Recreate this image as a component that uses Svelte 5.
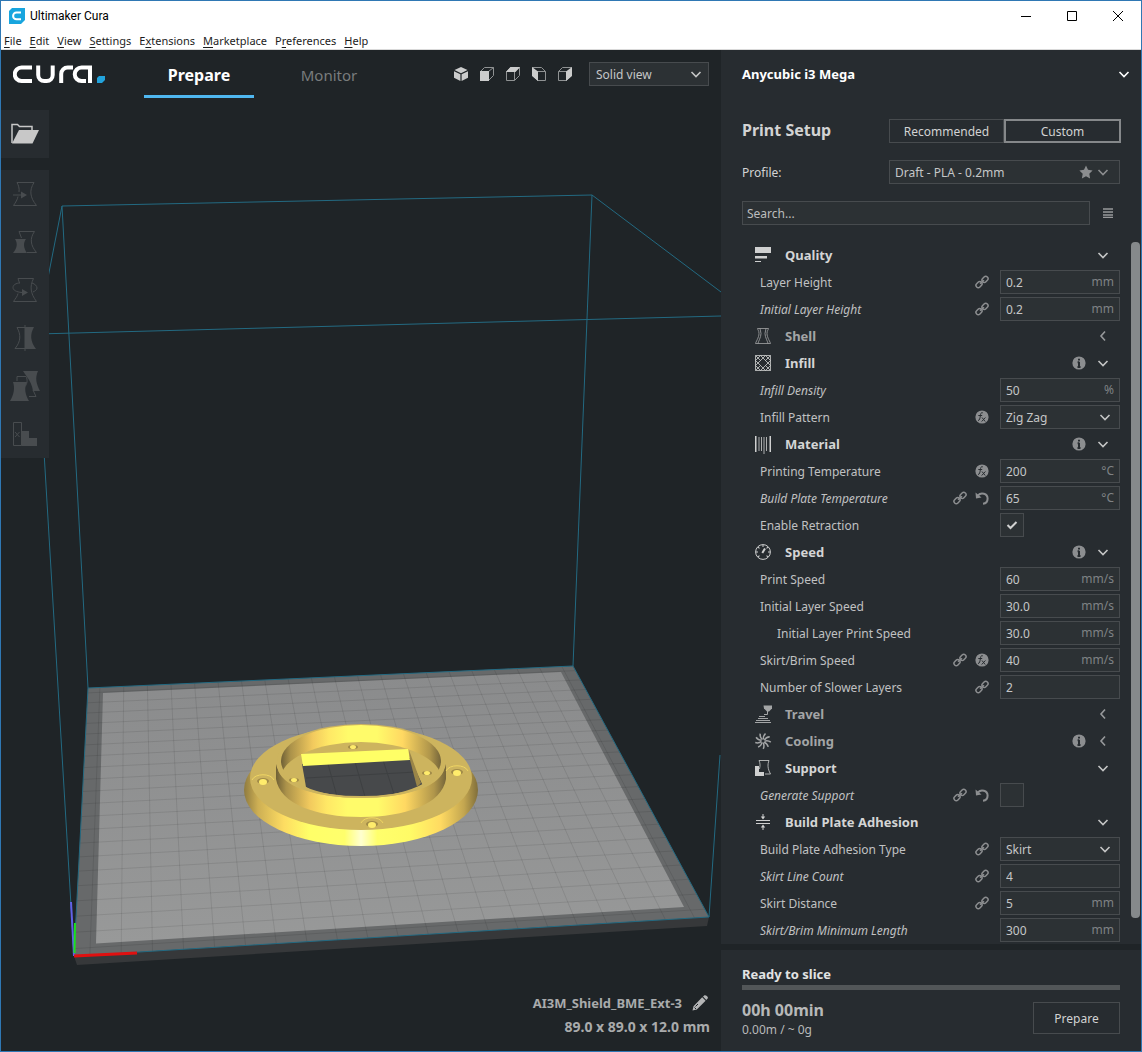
<script>
  const menus = [
    ['', 'F', 'ile'], ['', 'E', 'dit'], ['', 'V', 'iew'], ['', 'S', 'ettings'], ['E', 'x', 'tensions'],
    ['', 'M', 'arketplace'], ['P', 'r', 'eferences'], ['', 'H', 'elp']
  ];

  const tools = ['Move', 'Scale', 'Rotate', 'Mirror', 'Per Model Settings', 'Support Blocker'];
  const views = ['3D View', 'Front View', 'Top View', 'Left View', 'Right View'];

  const rows = [
    { cat: 'Quality', open: true },
    { name: 'Layer Height', marks: ['link'], value: '0.2', unit: 'mm' },
    { name: 'Initial Layer Height', changed: true, marks: ['link'], value: '0.2', unit: 'mm' },
    { cat: 'Shell', open: false },
    { cat: 'Infill', open: true, info: true },
    { name: 'Infill Density', changed: true, marks: [], value: '50', unit: '%' },
    { name: 'Infill Pattern', marks: ['fx'], select: 'Zig Zag' },
    { cat: 'Material', open: true, info: true },
    { name: 'Printing Temperature', marks: ['fx'], value: '200', unit: '°C' },
    { name: 'Build Plate Temperature', changed: true, marks: ['link', 'reset'], value: '65', unit: '°C' },
    { name: 'Enable Retraction', marks: [], check: true, checked: true },
    { cat: 'Speed', open: true, info: true },
    { name: 'Print Speed', marks: [], value: '60', unit: 'mm/s' },
    { name: 'Initial Layer Speed', marks: [], value: '30.0', unit: 'mm/s' },
    { name: 'Initial Layer Print Speed', child: true, marks: [], value: '30.0', unit: 'mm/s' },
    { name: 'Skirt/Brim Speed', marks: ['link', 'fx'], value: '40', unit: 'mm/s' },
    { name: 'Number of Slower Layers', marks: ['link'], value: '2', unit: '' },
    { cat: 'Travel', open: false },
    { cat: 'Cooling', open: false, info: true },
    { cat: 'Support', open: true },
    { name: 'Generate Support', changed: true, marks: ['link', 'reset'], check: true, checked: false },
    { cat: 'Build Plate Adhesion', open: true },
    { name: 'Build Plate Adhesion Type', marks: ['link'], select: 'Skirt' },
    { name: 'Skirt Line Count', changed: true, marks: ['link'], value: '4', unit: '' },
    { name: 'Skirt Distance', marks: ['link'], value: '5', unit: 'mm' },
    { name: 'Skirt/Brim Minimum Length', changed: true, marks: [], value: '300', unit: 'mm' }
  ];

  // Perspective mapping of the unit square onto the build plate corners.
  const [p0, p1, p2, p3] = [[74, 957], [709, 917], [573, 666], [88, 688]];
  const dx1 = p1[0] - p2[0], dx2 = p3[0] - p2[0], sx = p0[0] - p1[0] + p2[0] - p3[0];
  const dy1 = p1[1] - p2[1], dy2 = p3[1] - p2[1], sy = p0[1] - p1[1] + p2[1] - p3[1];
  const det = dx1 * dy2 - dx2 * dy1;
  const g = (sx * dy2 - dx2 * sy) / det;
  const h = (dx1 * sy - sx * dy1) / det;
  function plate(u, v) {
    const w = g * u + h * v + 1;
    const x = ((p1[0] - p0[0] + g * p1[0]) * u + (p3[0] - p0[0] + h * p3[0]) * v + p0[0]) / w;
    const y = ((p1[1] - p0[1] + g * p1[1]) * u + (p3[1] - p0[1] + h * p3[1]) * v + p0[1]) / w;
    return x.toFixed(1) + ' ' + y.toFixed(1);
  }
  const cells = 21;
  let grid = '';
  for (let i = 0; i < cells; i++) {
    const t = (i + 0.5) / cells;
    grid += `M${plate(t, 0)}L${plate(t, 1)}M${plate(0, t)}L${plate(1, t)}`;
  }
  const blades = [0, 40, 80, 120, 160, 200, 240, 280, 320];
  const ticks = [-135, -90, -45, 0, 45, 90, 135];
</script>

{#snippet chevron(open)}
  <svg class="chevron" width="12" height="12" viewBox="0 0 12 12" aria-hidden="true">
    <path d={open ? 'M1.5 4 6 8.5 10.5 4' : 'M8 1.5 4 6l4 4.5'} />
  </svg>
{/snippet}

{#snippet mark(kind)}
  <svg class="mark" width="14" height="14" viewBox="0 0 14 14" aria-hidden="true">
    {#if kind === 'link'}
      <g class="line">
        <rect x="-3.300" y="-2.300" width="6.600" height="4.600" rx="2.300" transform="translate(4 9.600) rotate(-45)" />
        <rect x="-3.300" y="-2.300" width="6.600" height="4.600" rx="2.300" transform="translate(10 4.400) rotate(-45)" />
        <path d="M5 8.800 9 5.200" />
      </g>
    {:else if kind === 'reset'}
      <path class="line heavy" d="M3 4.400C6 .8 12.600 2.400 12.600 7.500c0 3-2 5-4.600 5.300" />
      <path d="M.5 1.500 1 7.500l5.500-1z" />
    {:else if kind === 'fx'}
      <circle cx="7" cy="7" r="6.600" />
      <g class="cut">
        <path d="M7.800 2.800c-2-.6-2.200 1-2.500 3.200s-.6 4.500-2.300 4.500M3.300 5.500h3.900" />
        <path d="m7 7.500 3.200 4M10.400 7.500l-3.700 4" />
      </g>
    {:else}
      <circle cx="7" cy="7" r="6.600" />
      <path class="cut heavy" d="M7 2.800v1.800M7 5.800v5.200M5.600 6.200h1.400M5.500 11h3" />
    {/if}
  </svg>
{/snippet}

{#snippet category(name)}
  <svg class="cat-icon" width="16" height="16" viewBox="0 0 16 16" aria-hidden="true">
    {#if name === 'Quality'}
      <path class="fill" d="M0 0h16v6H0zM0 9h12v2.500H0zM0 14h6v1H0z" />
    {:else if name === 'Shell'}
      <path class="thin" d="M2.500.5h11M2.500.5c0 1 1.500 2 1.500 5 0 4-3.500 9-3.500 10h15c0-1-3.500-6-3.500-10 0-3 1.500-4 1.500-5M5 .5c0 2 1 3 1 5 0 4-3 8.500-3 10M11 .5c0 2-1 3-1 5 0 4 3 8.500 3 10" />
    {:else if name === 'Infill'}
      <path class="thin" d="M.5.5h15v15H.5zM.5 5.500l5-5M.5 10.500l10-10M5.500 15.500l10-10M10.500 15.500l5-5M.5 10.500l5 5M.5 5.500l10 10M5.500.5l10 10M10.500.5l5 5M.5.5l5 5M15.500.5l-5 5M.5 15.500l5-5M15.500 15.500l-5-5" />
    {:else if name === 'Material'}
      <path class="fill" d="M0 0h1.500v16H0zM14.500 0H16v16h-1.500z" />
      <path class="thin" d="M4 1v14M6.500 1v14M9 1v17M11.500 1v14" />
    {:else if name === 'Speed'}
      <circle cx="8" cy="8" r="7.400" />
      {#each ticks as a}
        <path d="M8 1v2" transform="rotate({a} 8 8)" />
      {/each}
      <path class="bold" d="M7.300 9 10 4.500" />
    {:else if name === 'Travel'}
      <path class="fill" d="M8.500-.5H17v3l-3 3h-2L9 2.500z" />
      <path d="M12.500 5v3.500H9M4 10.500h6M3 12.500h10M1 14.500h14M0 16.500h16" />
    {:else if name === 'Cooling'}
      {#each blades as a}
        <path class="blade" d="M8.500 6.500C8 4 9 2 10.500.5" transform="rotate({a} 8 8)" />
      {/each}
    {:else if name === 'Support'}
      <path class="fill" d="M0 6h4v6h5v4H0z" />
      <path class="thin" d="M4.500 9c1-4 .5-6-.5-8.500h10c-1.500 4-1.500 8 1.500 13.500H10" />
    {:else}
      <path d="M1 6.500h14M1 9.500h14M8 0v4M8 12v4" />
      <path class="fill" d="M5.800 2.500h4.400L8 5.500zM5.800 13.500h4.400L8 10.500z" />
    {/if}
  </svg>
{/snippet}

<div class="window">
  <header class="titlebar">
    <svg width="16" height="16" viewBox="0 0 16 16" aria-hidden="true">
      <path fill="#18a5de" d="M3 0h13v12l-4 4H0V3z" />
      <path fill="none" stroke="#fff" stroke-width="2" d="M12 4.500H7.500a3.400 3.400 0 0 0 0 6.800H12" />
    </svg>
    <h1>Ultimaker Cura</h1>
    <div class="window-buttons">
      <button aria-label="Minimize"><svg width="12" height="12" viewBox="0 0 12 12"><path d="M1 6.500h10" /></svg></button>
      <button aria-label="Maximize"><svg width="12" height="12" viewBox="0 0 12 12"><path d="M1.500 1.500h9v9h-9z" /></svg></button>
      <button aria-label="Close"><svg width="12" height="12" viewBox="0 0 12 12"><path d="m1 1 10 10M11 1 1 11" /></svg></button>
    </div>
  </header>

  <nav class="menubar" aria-label="Menu">
    {#each menus as [before, key, after]}
      <button>{before}<u>{key}</u>{after}</button>
    {/each}
  </nav>

  <div class="body">
    <main class="stage">
      <svg class="scene" viewBox="1 50 720 1001" preserveAspectRatio="xMinYMin slice" aria-hidden="true">
        <defs>
          <linearGradient id="bed" x1="0" y1="0" x2="0" y2="1">
            <stop offset="0" stop-color="#8a8b8c" /><stop offset="1" stop-color="#989999" />
          </linearGradient>
          <linearGradient id="bevel" x1="0" x2="1">
            <stop offset="0" stop-color="#8f7b40" /><stop offset=".06" stop-color="#cdaf54" />
            <stop offset=".17" stop-color="#fddc62" /><stop offset=".28" stop-color="#ffff68" />
            <stop offset=".43" stop-color="#ffff6c" /><stop offset=".5" stop-color="#ffffd0" />
            <stop offset=".57" stop-color="#ffff6c" /><stop offset=".71" stop-color="#fffb66" />
            <stop offset=".84" stop-color="#ffda62" /><stop offset=".94" stop-color="#c3a650" />
            <stop offset="1" stop-color="#806e3a" />
          </linearGradient>
          <linearGradient id="wall" x1="0" x2="1">
            <stop offset="0" stop-color="#6f6036" /><stop offset=".06" stop-color="#ab924a" />
            <stop offset=".2" stop-color="#f2ca5e" /><stop offset=".3" stop-color="#ffe866" />
            <stop offset=".42" stop-color="#fffb6a" /><stop offset=".6" stop-color="#fffb6a" />
            <stop offset=".76" stop-color="#ffd862" /><stop offset=".93" stop-color="#b0964b" />
            <stop offset="1" stop-color="#75653a" />
          </linearGradient>
          <clipPath id="opening"><ellipse cx="361" cy="761" rx="80" ry="36" /></clipPath>
        </defs>

        <path fill="#36383a" d="M74 956 709 917 707 926 77 965z" />
        <path fill="#67696a" d="M74 956 709 917 573 666 88 688z" />
        <path fill="url(#bed)" d="M96 943.500 684 907 561 672 103 693z" />
        <path class="grid" d={grid} />
        <path class="volume" d="M88 688 573 666 709 917 74 956zM62 206 592 195 573 666M62 206 88 688M62 206 37 334 721 316M592 195 721 292M37 334 74 956M720 755 709 917" />
        <path stroke="#6161e8" stroke-width="2" d="M71 902 74 956" />
        <path stroke="#1ee01e" stroke-width="2" d="M75 923 74.500 953" />
        <path stroke="#e01010" stroke-width="3" d="M74 956 137 953" />

        <ellipse cx="361" cy="790" rx="117" ry="56" fill="url(#bevel)" />
        <ellipse cx="361" cy="778" rx="111" ry="52" fill="#cdb45e" />
        <ellipse cx="361" cy="761" rx="84" ry="37" fill="#cdb45e" />
        <g clip-path="url(#opening)">
          <path fill="url(#wall)" d="M281 715h160v55H281z" />
          <ellipse cx="361" cy="780" rx="81" ry="38" fill="#cdb45e" />
          <path fill="#47494b" d="M302 764 410 758 423 786 390 802H330L306 787z" />
          <path class="seam" d="M306 778 416 772M328 764 338 800M355 762 366 800M383 760 396 800" />
          <path fill="#ffff66" d="M301 754 408 749 410 760 303 766z" />
          <path fill="#9a8548" d="M409 750 421 783 417 787 410 760z" />
        </g>
        <path fill="url(#wall)" d="M276 764C280 786 316 798 361 798S442 786 446 764V779C442 804 406 817 361 817S280 804 276 779z" />
        <path fill="none" stroke="#cdb45e" stroke-width="2" d="M279 770C286 787 318 797 361 797S436 787 443 770" />
        {#each [[263, 781], [372, 824], [457, 772]] as [x, y]}
          <path fill="none" stroke="#f0d663" d="M{x - 11} {y - 1}C{x - 8} {y - 8} {x + 8} {y - 8} {x + 11} {y - 1}" />
          <ellipse cx={x} cy={y} rx="6" ry="3" fill="#a18b48" />
          <ellipse cx={x} cy={y + 1} rx="4" ry="3" fill="#ffec6c" />
        {/each}
        {#each [[353, 747], [427, 773], [294, 780]] as [x, y]}
          <ellipse cx={x} cy={y} rx="5" ry="2" fill="#a18b48" />
          <ellipse cx={x} cy={y} rx="3" ry="2" fill="#ffec6c" />
        {/each}
      </svg>

      <div class="topbar">
        <svg class="logo" width="92" height="19" viewBox="0 0 92 19" role="img" aria-label="Cura">
          <g fill="none" stroke="#fff" stroke-width="4">
            <path d="M19 2.500H8.500a6.500 6.500 0 0 0 0 13.500H19" />
            <path d="M25.200.5v9.500a6 6 0 0 0 6 6h2.500a6 6 0 0 0 6-6V.5" />
            <path d="M48.200 18v-9a6.500 6.500 0 0 1 6.500-6.500H60" />
            <path d="M77 18V2.500h-8.500a6.700 6.700 0 0 0 0 13.500H73" />
          </g>
          <path fill="#22a3dc" d="M86 11h6v4l-3 3h-5v-5z" />
        </svg>
        <nav class="tabs" aria-label="Stages">
          <button class="tab active">Prepare</button>
          <button class="tab">Monitor</button>
        </nav>
        <div class="views">
          {#each views as view, i}
            <button aria-label={view}>
              <svg width="14" height="14" viewBox="0 0 14 14">
                {#if i === 0}
                  <path class="face" d="M7 0 13.500 3 7 6.200.5 3zM0 4.200l6.400 3V14L0 10.800zM14 4.200l-6.400 3V14l6.400-3.200z" />
                {:else if i === 1}
                  <path d="M.5 4.500h8v9h-8zM.5 4.500l4-4h9v8l-5 5M8.500 4.500l5-4" /><path class="face" d="M0 4h9v10H0z" />
                {:else if i === 2}
                  <path d="M.5 4.500h8v9h-8zM.5 4.500l4-4h9v8l-5 5M8.500 4.500l5-4" /><path class="face" d="M0 5 4.500 0H14L9.500 5z" />
                {:else if i === 3}
                  <path d="M5.500 4.500h8v9h-8zM.5.5h9l4 4M.5.500v8l5 5" /><path class="face" d="M0 0 6 4.500V14L0 9z" />
                {:else}
                  <path d="M.5 4.500h8v9h-8zM.5 4.500l4-4h9v8l-5 5" /><path class="face" d="M8 4.500 14 0v9l-6 5z" />
                {/if}
              </svg>
            </button>
          {/each}
        </div>
        <div class="control view-mode">
          <select aria-label="View mode"><option>Solid view</option></select>
          {@render chevron(true)}
        </div>
      </div>

      <div class="toolbar">
        <button class="tool open" aria-label="Open File">
          <svg width="30" height="30" viewBox="0 0 30 30">
            <path fill="none" stroke="#c8c8c8" stroke-width="1.500" d="M2 24V5.500h5.500l2 2H22V11" />
            <path fill="#c8c8c8" d="M9 11h20l-6.500 13.500H2z" />
          </svg>
        </button>
        <div class="tool-group">
          {#each tools as tool, i}
            <button class="tool" aria-label={tool} disabled>
              <svg width="30" height="30" viewBox="0 0 30 30">
                {#if i === 0}
                  <path d="M7 3.500h17c-5 8-4 15 2.500 23h-23c2-3 4-6 4.500-9M7 3.500c1.500 3 2.500 5.500 2 9.500M3 16h9" /><path class="solid" d="m11 12.500 6 3.500-6 3.500z" />
                {:else if i === 1}
                  <path d="M9 4.500h15.500c-5 7-4 14 2 21H17M9 4.500 11.500 11" /><path class="solid" d="M5 12h11c-3 4-2.500 9 1 14H3c4-5 5-9 2-14z" />
                {:else if i === 2}
                  <path d="M8 3.500h15.500c-4 8-3 15 3 23h-23c1.500-2.500 4-5 4.500-8M8 3.500 9.500 8" />
                  <path d="M10 8C6 8 3 10 3 12.500S6 17 12 17.500M22 8c3 1 5 3 5 5s-2 3-4 4" /><path class="solid" d="m12 14 6 3.500-6 3.500z" />
                {:else if i === 3}
                  <path d="M15 4.500H7c4 7 4 14-2 21H15M15 2v26" /><path class="solid" d="M15 4h9c-4 7-4 14 2 22H15z" />
                {:else if i === 4}
                  <path d="M7 10V5.500h9c2 3 1 8-1 10M19 25.500h7L23 19" /><path class="solid" d="M3 11h14c-3 6-2 12 2 19H0c4-7 5-13 3-19zM13 0h15c-3 7-2 12 2 20h-7c-1-6-3-10-6-14z" />
                {:else}
                  <path d="M3.500 3.500h8v23h-8zM5 13l4.500 5M9.500 13 5 18" /><path class="solid" d="M11.500 12H19v7h8v8H11.500z" />
                {/if}
              </svg>
            </button>
          {/each}
        </div>
      </div>

      <footer class="job">
        <div class="job-name">
          <strong>AI3M_Shield_BME_Ext-3</strong>
          <button aria-label="Rename job">
            <svg width="16" height="16" viewBox="0 0 16 16">
              <path fill="#b4b5b6" d="M11 1.500 12.500.3q1-.5 2 .5l.8.8q1 1 .3 2L14.300 5zM10.200 2.300l3.400 3.400L4.800 14.500.5 15.500l1-4.300z" />
              <path stroke="#1f2427" d="M3.500 11.500 6 9M2.500 12.500l1.500 1.500" />
            </svg>
          </button>
        </div>
        <strong class="size">89.0 x 89.0 x 12.0 mm</strong>
      </footer>
    </main>

    <aside class="sidebar">
      <section class="settings-panel">
        <button class="machine"><span>Anycubic i3 Mega</span>{@render chevron(true)}</button>

        <div class="setup">
          <h2>Print Setup</h2>
          <div class="modes">
            <button>Recommended</button>
            <button class="selected">Custom</button>
          </div>
        </div>

        <div class="setup profile">
          <label for="profile">Profile:</label>
          <div class="control">
            <select id="profile"><option>Draft - PLA - 0.2mm</option></select>
            <svg class="star" width="14" height="14" viewBox="0 0 14 14" aria-hidden="true"><path d="m7 .5 2 4.300 4.600.6-3.300 3.300.8 4.800L7 11.200l-4.100 2.300.8-4.800L.4 5.400 5 4.800z" /></svg>
            {@render chevron(true)}
          </div>
        </div>

        <div class="search">
          <div class="control"><input type="text" placeholder="Search..." aria-label="Search settings" /></div>
          <button aria-label="Setting visibility">
            <svg width="12" height="10" viewBox="0 0 12 10"><path stroke="#98999b" stroke-width="1.500" d="M1 1h10M1 4h10M1 7h10M1 9.500h10" /></svg>
          </button>
        </div>

        <div class="scroller">
          <div class="list">
            {#each rows as row, i}
              {#if row.cat}
                <button class="row category" class:closed={!row.open} aria-expanded={row.open}>
                  {@render category(row.cat)}
                  <span class="label">{row.cat}</span>
                  {#if row.info}{@render mark('info')}{/if}
                  {@render chevron(row.open)}
                </button>
              {:else}
                <div class="row setting" class:child={row.child}>
                  <label class="label" class:changed={row.changed} for="setting-{i}">{row.name}</label>
                  {#each row.marks as kind}{@render mark(kind)}{/each}
                  {#if row.check}
                    <div class="field">
                      <span class="box">
                        <input id="setting-{i}" type="checkbox" checked={row.checked} />
                        <svg width="12" height="12" viewBox="0 0 12 12" aria-hidden="true"><path d="m1.500 6 3 3 6-6" /></svg>
                      </span>
                    </div>
                  {:else if row.select}
                    <div class="field control">
                      <select id="setting-{i}"><option>{row.select}</option></select>
                      {@render chevron(true)}
                    </div>
                  {:else}
                    <div class="field control">
                      <input id="setting-{i}" type="text" value={row.value} />
                      <span class="unit">{row.unit}</span>
                    </div>
                  {/if}
                </div>
              {/if}
            {/each}
          </div>
          <div class="scrollbar"></div>
        </div>
      </section>

      <section class="slice-panel">
        <strong class="status">Ready to slice</strong>
        <div class="progress"></div>
        <div class="result">
          <div class="estimate">
            <strong class="time">00h 00min</strong>
            <p>0.00m / ~ 0g</p>
          </div>
          <button class="prepare">Prepare</button>
        </div>
      </section>
    </aside>
  </div>
</div>

<style>
  :global(body) { margin: 0; background: #1f2427; }
  * { box-sizing: border-box; }
  button, input, select {
    margin: 0; padding: 0; border: 0; border-radius: 0; background: none; color: inherit; font: inherit;
  }
  h1, h2, p { margin: 0; font: inherit; }
  svg { display: block; flex: none; }

  .window {
    display: flex; flex-direction: column; min-height: 100vh;
    border: 1px solid #2f78b4; color: #d2d3d3;
    font: 12px/16px "Noto Sans", "Open Sans", sans-serif;
  }
  .titlebar { display: flex; align-items: center; gap: 5px; height: 29px; padding-left: 8px; background: #fff; color: #000; }
  .titlebar h1 { flex: 1; font: 12px/16px Roboto, sans-serif; }
  .window-buttons { display: flex; }
  .window-buttons button { display: grid; place-items: center; width: 46px; height: 29px; }
  .window-buttons path { fill: none; stroke: #000; }

  .menubar {
    display: flex; gap: 8px; height: 20px; padding: 2px 3px 0; background: #fff;
    border-bottom: 1px solid #d9d9d9; color: #1c1c1c; font-size: 11px;
  }
  .menubar u { text-underline-offset: 2px; }

  .body { flex: 1; display: grid; grid-template-columns: minmax(0, 1fr) 420px; }

  .stage { position: relative; display: flex; flex-direction: column; background: #1f2427; }
  .scene { position: absolute; inset: 0; width: 100%; height: 100%; }
  .grid { fill: none; stroke: #000; stroke-opacity: .09; stroke-width: 1; }
  .volume { fill: none; stroke: #236a82; }
  .seam { fill: none; stroke: #3e4042; }

  .topbar, .toolbar, .job { position: relative; }
  .topbar { display: flex; align-items: center; height: 48px; padding: 0 12px; }
  .tabs { display: flex; gap: 20px; margin: 0 auto 0 39px; }
  .tab { width: 110px; height: 48px; padding-top: 4px; border-bottom: 3px solid transparent; color: #797c7d; font-size: 15px; line-height: 20px; }
  .active { border-color: #4fb7f0; color: #fff; font-size: 16px; font-weight: 700; }
  .views { display: flex; gap: 12px; margin-right: 17px; }
  .views path { fill: none; stroke: #8f9293; }
  .views .face { fill: #cbcccc; stroke: none; }

  .control {
    display: flex; align-items: center; height: 24px;
    background: #2c3134; border: 1px solid #474b4e; color: #c5c6c7; position: relative;
  }
  .control select { appearance: none; width: 100%; height: 22px; padding: 1px 5px 0; }
  .control input { flex: 1; min-width: 0; height: 22px; padding: 0 5px; }
  .control .chevron { position: absolute; right: 8px; pointer-events: none; }
  .view-mode { width: 120px; padding-left: 1px; }
  .view-mode .chevron { right: 6px; }
  .chevron path { fill: none; stroke: #c4c5c5; stroke-width: 1.6; }

  .toolbar { display: flex; flex-direction: column; gap: 12px; width: 48px; margin-top: 12px; }
  .tool-group { background: #272c30; }
  .tool { display: grid; place-items: center; width: 48px; height: 48px; background: #272c30; }
  .tool-group path { fill: none; stroke: #484c4f; }
  .tool-group .solid { fill: #484c4f; stroke: none; }

  .job {
    display: flex; flex-direction: column; align-items: flex-end; gap: 8px;
    margin-top: auto; padding: 0 11px 16px; color: #a9abac; font-size: 13px;
  }
  .job-name { display: flex; align-items: center; gap: 10px; padding-right: 2px; }
  .size { font-size: 14px; }

  .sidebar { display: flex; flex-direction: column; gap: 6px; background: #1f2427; }
  .settings-panel { flex: 1; padding-left: 21px; background: #272c30; }
  .machine {
    display: flex; justify-content: space-between; align-items: center;
    width: 100%; height: 48px; padding-right: 11px; color: #fff; font-weight: 700; font-size: 13px;
  }
  .machine .chevron path { stroke: #fff; }
  .setup { display: flex; justify-content: space-between; margin: 21px 20px 0 0; }
  .setup h2 { font-weight: 700; font-size: 16px; line-height: 22px; }
  .modes { display: flex; width: 232px; }
  .modes button { flex: 1 1 0; height: 24px; padding-top: 2px; border: 1px solid #474b4e; line-height: 16px; }
  .modes .selected { border: 2px solid #85888a; }
  .profile { align-items: center; margin: 17px 21px 0 0; }
  .profile label { padding-top: 2px; }
  .profile .control { width: 231px; }
  .profile .control .chevron { right: 10px; }
  .profile .chevron path { stroke: #8b8d8f; }
  .star { position: absolute; right: 26px; fill: #8b8d8f; pointer-events: none; }
  .search { display: flex; align-items: center; gap: 12px; margin: 17px 27px 0 0; }
  .search .control { flex: 1; }
  .search input { padding: 0 4px; }
  .search input::placeholder { color: #bcbdbe; opacity: 1; }

  .scroller { display: flex; gap: 11px; margin-top: 17px; padding: 0 1px 2px 0; }
  .list { flex: 1; display: grid; gap: 3px; padding-top: 1px; }
  .row { display: flex; align-items: center; height: 24px; gap: 8px; }
  .label { flex: 1; text-align: left; }
  .category { padding: 0 11px 0 13px; gap: 11px; font-weight: 700; font-size: 13px; color: #d4d5d5; }
  .category .label { padding-left: 3px; }
  .category.closed { color: #a3a5a6; }
  .cat-icon { overflow: visible; }
  .cat-icon path, .cat-icon circle { fill: none; stroke: #cfd0d0; }
  .closed .cat-icon path { stroke: #a3a5a6; }
  .cat-icon .fill { fill: #cfd0d0; stroke: none; }
  .closed .cat-icon .fill { fill: #a3a5a6; stroke: none; }
  .cat-icon .bold { stroke-width: 2; }
  .cat-icon .blade { stroke-width: 1.5; }
  .cat-icon .thin { stroke-width: .8; }
  .closed .chevron path { stroke: #97999b; }
  .setting { padding-left: 18px; color: #c0c1c2; }
  .setting .label { padding-top: 2px; }
  .child { padding-left: 35px; }
  .changed { font-style: italic; }
  .mark { fill: #8c8e90; }
  .mark .line { fill: none; stroke: #8c8e90; stroke-width: 1.5; }
  .mark .cut { fill: none; stroke: #272c30; }
  .mark .heavy { stroke-width: 2; }
  .field { width: 120px; margin-left: 3px; }
  .unit { padding-right: 5px; color: #7f8284; }
  .box { display: grid; place-items: center; width: 24px; height: 24px; background: #2c3134; border: 1px solid #474b4e; }
  .box > * { grid-area: 1 / 1; }
  .box input { appearance: none; width: 22px; height: 22px; }
  .box svg { visibility: hidden; pointer-events: none; }
  .box input:checked + svg { visibility: visible; }
  .box path { fill: none; stroke: #d0d1d1; stroke-width: 2; }
  .scrollbar { width: 9px; margin-bottom: 24px; border-radius: 4px; background: #85898b; }

  .slice-panel { height: 101px; padding: 16px 21px 0; background: #272c30; }
  .status { display: block; color: #e2e3e3; font-size: 13px; }
  .progress { height: 5px; margin: 3px 0 9px; background: #525658; }
  .result { display: flex; justify-content: space-between; align-items: flex-start; color: #b7b9b9; }
  .estimate { display: grid; gap: 1px; }
  .time { font-size: 16px; line-height: 22px; }
  .prepare { width: 87px; height: 32px; margin-top: 3px; padding-top: 2px; border: 1px solid #474b4e; color: #d2d3d3; }
</style>
